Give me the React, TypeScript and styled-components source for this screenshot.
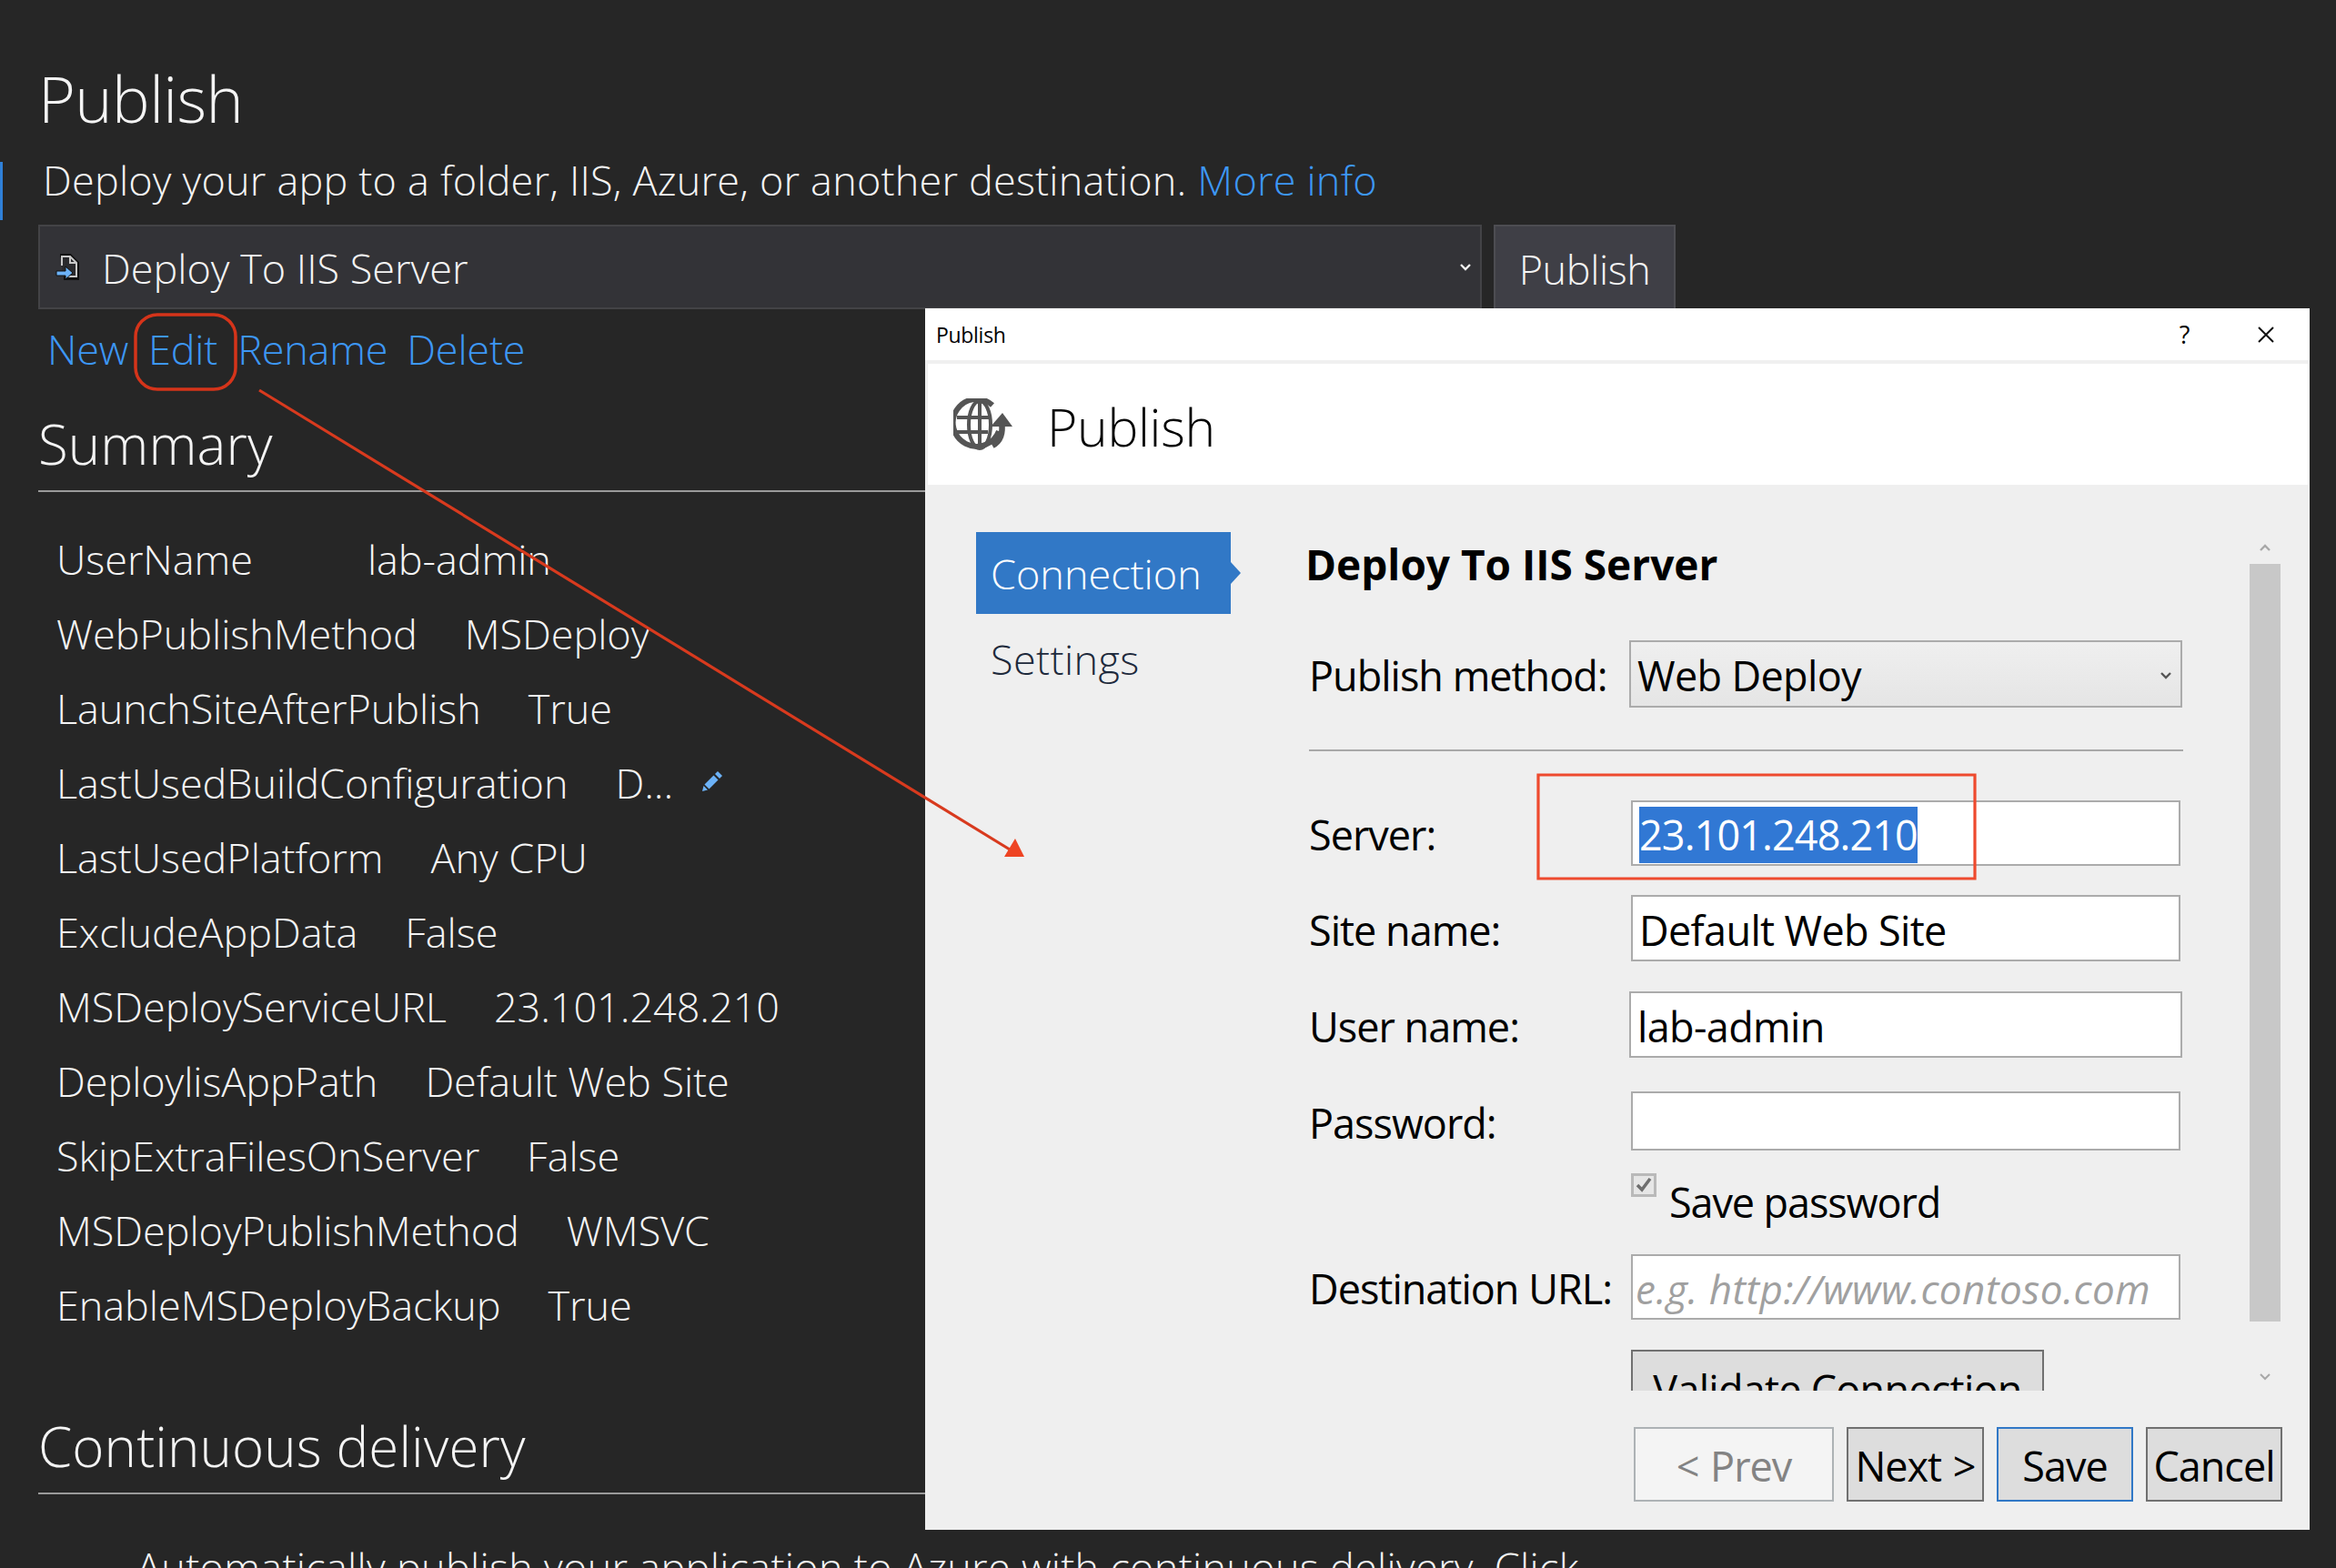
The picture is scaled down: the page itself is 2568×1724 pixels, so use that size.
import React from 'react';
import styled, { createGlobalStyle } from 'styled-components';

const FONT = `"Open Sans", "Noto Sans", sans-serif`;

const GlobalStyle = createGlobalStyle`
  html, body {
    margin: 0;
    padding: 0;
    width: 2568px;
    height: 1724px;
    overflow: hidden;
    background: #262626;
  }
`;

const Page = styled.div`
  position: relative;
  width: 2568px;
  height: 1724px;
  overflow: hidden;
  background: #262626;
  color: #f4f4f4;
  font-family: ${FONT};
`;

const LeftPanel = styled.div`
  width: 1000px;
  padding: 65px 0 0 42px;
`;

const PageTitle = styled.h1`
  margin: 0;
  font-size: 70px;
  line-height: 86px;
  font-weight: 300;
  letter-spacing: -0.6px;
`;

const IntroRow = styled.div`
  position: relative;
  margin-top: 16px;
  padding-left: 5px;
  height: 70px;
  font-size: 45px;
  line-height: 62px;
  font-weight: 350;
  letter-spacing: 0.2px;
  white-space: nowrap;
  width: 1700px;
`;

const FocusMark = styled.span`
  position: absolute;
  left: -42px;
  top: 11px;
  width: 3px;
  height: 64px;
  background: #2f80d8;
`;

const Link = styled.a`
  color: #3d97f5;
`;

const ProfileRow = styled.div`
  display: flex;
  gap: 13px;
  margin-top: 10px;
  width: 1800px;
`;

const ProfileSelect = styled.div`
  box-sizing: border-box;
  width: 1588px;
  height: 93px;
  display: flex;
  align-items: center;
  padding: 0 9px 0 17px;
  background: #333337;
  border: 2px solid #434346;
  font-size: 45px;
  font-weight: 350;
  letter-spacing: 0;
`;

const ProfileName = styled.span`
  margin-left: 21px;
  padding-top: 2px;
  flex: 1;
`;

const DarkButton = styled.div`
  box-sizing: border-box;
  width: 200px;
  height: 93px;
  display: flex;
  align-items: center;
  justify-content: center;
  padding-top: 1px;
  background: #3f3f46;
  border: 2px solid #4d4d52;
  border-bottom: none;
  font-size: 45px;
  font-weight: 350;
  letter-spacing: -0.4px;
`;

const LinkRow = styled.div`
  display: flex;
  margin: 16px 0 0 10px;
  height: 56px;
  font-size: 45px;
  line-height: 56px;
  font-weight: 350;
  letter-spacing: -0.2px;
`;

const ActionLink = styled(Link)<{ $gap: number }>`
  margin-right: ${({ $gap }) => $gap}px;
`;

const SectionTitle = styled.h2<{ $top: number }>`
  margin: ${({ $top }) => $top}px 0 0;
  height: 89px;
  font-size: 60px;
  line-height: 76px;
  font-weight: 300;
  letter-spacing: 0.1px;
  border-bottom: 2px solid #9a9a9a;
  width: 1000px;
  box-sizing: content-box;
  white-space: nowrap;
`;

const SummaryList = styled.div`
  margin: 32px 0 0 20px;
`;

const SummaryRow = styled.div<{ $gap: number }>`
  display: flex;
  align-items: center;
  height: 82px;
  gap: ${({ $gap }) => $gap}px;
  font-size: 45px;
  font-weight: 350;
  letter-spacing: -0.05px;
  white-space: nowrap;
`;

const PencilIcon = styled.svg`
  margin-left: -22px;
  margin-top: -4px;
`;

const DeliveryText = styled.div`
  margin: 50px 0 0 108px;
  width: 1800px;
  font-size: 45px;
  line-height: 60px;
  font-weight: 350;
  letter-spacing: 0.3px;
  white-space: nowrap;
`;

const Dialog = styled.div`
  position: absolute;
  left: 1017px;
  top: 339px;
  width: 1522px;
  height: 1343px;
  background: #efefef;
  color: #000;
  font-family: ${FONT};
  display: flex;
  flex-direction: column;
`;

const TitleBar = styled.div`
  height: 57px;
  flex: none;
  display: flex;
  align-items: center;
  padding: 0 38px 0 12px;
  background: #fff;
  font-size: 23px;
  letter-spacing: -0.3px;
  border-bottom: 4px solid #f0f0f0;
`;

const TitleText = styled.span`
  flex: 1;
`;

const HelpMark = styled.span`
  font-size: 27px;
  margin-right: 74px;
`;

const DialogHeader = styled.div`
  flex: none;
  height: 133px;
  margin: 0 2px 0 3px;
  display: flex;
  align-items: center;
  background: #fff;
  padding-left: 28px;
  box-sizing: border-box;
`;

const HeaderTitle = styled.span`
  margin-left: 37px;
  font-size: 57px;
  font-weight: 350;
  letter-spacing: -0.3px;
  padding-top: 4px;
`;

const DialogBody = styled.div`
  flex: none;
  height: 996px;
  display: flex;
  overflow: hidden;
`;

const Nav = styled.div`
  flex: none;
  width: 422px;
  padding: 52px 0 0 56px;
  box-sizing: border-box;
`;

const NavItem = styled.div<{ $active?: boolean }>`
  position: relative;
  box-sizing: border-box;
  width: 280px;
  height: ${({ $active }) => ($active ? 90 : 98)}px;
  padding-left: 16px;
  display: flex;
  align-items: center;
  font-size: 45px;
  font-weight: 350;
  letter-spacing: ${({ $active }) => ($active ? 0 : 0.4)}px;
  background: ${({ $active }) => ($active ? '#3178c6' : 'transparent')};
  color: ${({ $active }) => ($active ? '#fff' : '#1e2a3c')};

  &::after {
    content: '';
    display: ${({ $active }) => ($active ? 'block' : 'none')};
    position: absolute;
    left: 100%;
    top: 33px;
    border-left: 11px solid #3178c6;
    border-top: 12px solid transparent;
    border-bottom: 12px solid transparent;
  }
`;

const Form = styled.div`
  flex: none;
  width: 962px;
  padding-top: 58px;
  box-sizing: border-box;
`;

const FormTitle = styled.div`
  font-size: 46px;
  line-height: 58px;
  font-weight: 700;
  letter-spacing: 0;
  margin-left: -4px;
  white-space: nowrap;
`;

const Row = styled.div<{ $top: number }>`
  display: flex;
  align-items: center;
  margin-top: ${({ $top }) => $top}px;
`;

const Label = styled.div<{ $width?: number }>`
  flex: none;
  width: ${({ $width }) => $width ?? 354}px;
  padding-top: 3px;
  font-size: 45px;
  font-weight: 400;
  letter-spacing: -1px;
  white-space: nowrap;
`;

const Input = styled.div<{ $height: number; $width?: number }>`
  box-sizing: border-box;
  width: ${({ $width }) => $width ?? 604}px;
  height: ${({ $height }) => $height}px;
  display: flex;
  align-items: center;
  padding: 3px 0 0 7px;
  background: #fff;
  border: 2px solid #ababab;
  font-size: 45px;
  letter-spacing: -0.65px;
  white-space: nowrap;
`;

const SelectBox = styled(Input)`
  background: linear-gradient(#efefef, #e5e5e5);
  justify-content: space-between;
  padding-right: 9px;
`;

const Placeholder = styled.span`
  color: #a0a0a0;
  font-style: italic;
  font-size: 44px;
  margin-left: -4px;
  letter-spacing: 0.5px;
`;

const Selected = styled.span`
  background: #3178d4;
  color: #fff;
  padding: 4px 0;
  line-height: 54px;
  letter-spacing: -0.9px;
`;

const Separator = styled.div`
  margin-top: 46px;
  height: 2px;
  width: 961px;
  background: #a8a8a8;
`;

const CheckRow = styled.div`
  display: flex;
  margin: 25px 0 0 354px;
  height: 64px;
`;

const CheckBox = styled.div`
  box-sizing: border-box;
  flex: none;
  width: 28px;
  height: 26px;
  display: flex;
  align-items: center;
  justify-content: center;
  background: #e6e6e6;
  border: 3px solid #b9b9b9;
`;

const CheckLabel = styled.div`
  margin: 4px 0 0 14px;
  font-size: 45px;
  letter-spacing: -1.1px;
  line-height: 56px;
`;

const ValidateButton = styled.div`
  box-sizing: border-box;
  margin: 33px 0 0 354px;
  width: 454px;
  height: 120px;
  border: 2px solid #707070;
  background: #dddddd;
  text-align: center;
  font-size: 45px;
  line-height: 84px;
  letter-spacing: -0.75px;
`;

const ScrollColumn = styled.div`
  flex: none;
  width: 34px;
  margin-left: 72px;
  padding-top: 63px;
  display: flex;
  flex-direction: column;
  align-items: center;
`;

const ScrollThumb = styled.div`
  width: 34px;
  height: 833px;
  margin-top: 12px;
  background: #c8c8c8;
`;

const ScrollDown = styled.svg`
  margin-top: 55px;
`;

const Footer = styled.div`
  flex: 1;
  display: flex;
  justify-content: flex-end;
  gap: 14px;
  padding: 40px 30px 0 0;
`;

const FooterButton = styled.div<{ $width: number; $variant?: 'disabled' | 'focus' }>`
  box-sizing: border-box;
  width: ${({ $width }) => $width}px;
  height: 82px;
  display: flex;
  align-items: center;
  justify-content: center;
  padding-top: 3px;
  font-size: 45px;
  letter-spacing: -1px;
  word-spacing: 2px;
  white-space: nowrap;
  background: ${({ $variant }) => ($variant === 'disabled' ? '#f4f4f4' : '#dddddd')};
  color: ${({ $variant }) => ($variant === 'disabled' ? '#838383' : '#000')};
  border: 2px solid
    ${({ $variant }) =>
      $variant === 'disabled' ? '#adb2b5' : $variant === 'focus' ? '#3178c6' : '#707070'};
`;

const Annotations = styled.svg`
  position: absolute;
  left: 0;
  top: 0;
  pointer-events: none;
`;

const DeployFileIcon = () => (
  <svg width="30" height="30" viewBox="0 0 30 30">
    <path d="M5 2h11l8 8v17H9" fill="#2a2a2d" stroke="#111" strokeWidth="4" />
    <path d="M7 13V3h9l7 7v15H11" fill="none" stroke="#c8c8c8" strokeWidth="2" />
    <path d="M16 3v7h7" fill="none" stroke="#c8c8c8" strokeWidth="2" />
    <path d="M1 19h10v-5l8 7-8 7v-4H1z" fill="#6cb2f7" stroke="#111" strokeWidth="1" />
  </svg>
);

const Chevron = ({ color, up }: { color: string; up?: boolean }) => (
  <svg width="14" height="12" viewBox="0 0 14 12">
    <path
      d={up ? 'M2 9l5-5 5 5' : 'M2 3l5 5 5-5'}
      fill="none"
      stroke={color}
      strokeWidth="2.4"
    />
  </svg>
);

const GlobeUploadIcon = () => (
  <svg width="66" height="58" viewBox="0 0 66 58">
    <g fill="none" stroke="#555" strokeLinecap="butt">
      <path d="M43 7.500A26 26 0 1 0 50 36" strokeWidth="6" />
      <ellipse cx="29" cy="29" rx="12" ry="26" strokeWidth="4" />
      <path d="M29 3v52M4 21h38M4 37h34" strokeWidth="4" />
      <path d="M43 52c9-5 12-14 10-26" strokeWidth="6.500" />
    </g>
    <path d="M41 31L54 16l11 15z" fill="#555" />
  </svg>
);

const summary: { name: string; value: string; gap?: number }[] = [
  { name: 'UserName', value: 'lab-admin', gap: 126 },
  { name: 'WebPublishMethod', value: 'MSDeploy' },
  { name: 'LaunchSiteAfterPublish', value: 'True' },
  { name: 'LastUsedBuildConfiguration', value: 'D...' },
  { name: 'LastUsedPlatform', value: 'Any CPU' },
  { name: 'ExcludeAppData', value: 'False' },
  { name: 'MSDeployServiceURL', value: '23.101.248.210' },
  { name: 'DeploylisAppPath', value: 'Default Web Site' },
  { name: 'SkipExtraFilesOnServer', value: 'False' },
  { name: 'MSDeployPublishMethod', value: 'WMSVC' },
  { name: 'EnableMSDeployBackup', value: 'True' },
];

export default function App() {
  return (
    <Page>
      <GlobalStyle />
      <LeftPanel>
        <PageTitle>Publish</PageTitle>
        <IntroRow>
          <FocusMark />
          Deploy your app to a folder, IIS, Azure, or another destination. <Link>More info</Link>
        </IntroRow>
        <ProfileRow>
          <ProfileSelect>
            <DeployFileIcon />
            <ProfileName>Deploy To IIS Server</ProfileName>
            <Chevron color="#f1f1f1" />
          </ProfileSelect>
          <DarkButton>Publish</DarkButton>
        </ProfileRow>
        <LinkRow>
          <ActionLink $gap={22}>New</ActionLink>
          <ActionLink $gap={22}>Edit</ActionLink>
          <ActionLink $gap={21}>Rename</ActionLink>
          <ActionLink $gap={0}>Delete</ActionLink>
        </LinkRow>
        <SectionTitle $top={38}>Summary</SectionTitle>
        <SummaryList>
          {summary.map((row) => (
            <SummaryRow key={row.name} $gap={row.gap ?? 52}>
              <span>{row.name}</span>
              <span>{row.value}</span>
              {row.value === 'D...' && (
                <PencilIcon width="28" height="28" viewBox="0 0 28 28">
                  <path d="M19 4l5 5-3 3-5-5z" fill="#6cb2f7" />
                  <path d="M14.500 8.500l5 5-10 10-5-5z" fill="#6cb2f7" />
                  <path d="M3.500 20l4.500 4.500-6 1.500z" fill="#6cb2f7" />
                </PencilIcon>
              )}
            </SummaryRow>
          ))}
        </SummaryList>
        <SectionTitle $top={77}>Continuous delivery</SectionTitle>
        <DeliveryText>
          Automatically publish your application to Azure with continuous delivery. Click
        </DeliveryText>
      </LeftPanel>

      <Dialog>
        <TitleBar>
          <TitleText>Publish</TitleText>
          <HelpMark>?</HelpMark>
          <svg width="20" height="20" viewBox="0 0 20 20">
            <path d="M2 2l16 16M18 2L2 18" stroke="#111" strokeWidth="2" />
          </svg>
        </TitleBar>
        <DialogHeader>
          <GlobeUploadIcon />
          <HeaderTitle>Publish</HeaderTitle>
        </DialogHeader>
        <DialogBody>
          <Nav>
            <NavItem $active>Connection</NavItem>
            <NavItem>Settings</NavItem>
          </Nav>
          <Form>
            <FormTitle>Deploy To IIS Server</FormTitle>
            <Row $top={55}>
              <Label $width={352}>Publish method:</Label>
              <SelectBox $height={74} $width={608}>
                Web Deploy
                <Chevron color="#555" />
              </SelectBox>
            </Row>
            <Separator />
            <Row $top={54}>
              <Label>Server:</Label>
              <Input $height={72}>
                <Selected>23.101.248.210</Selected>
              </Input>
            </Row>
            <Row $top={32}>
              <Label>Site name:</Label>
              <Input $height={73}>Default Web Site</Input>
            </Row>
            <Row $top={33}>
              <Label $width={352}>User name:</Label>
              <Input $height={73} $width={608}>
                lab-admin
              </Input>
            </Row>
            <Row $top={37}>
              <Label>Password:</Label>
              <Input $height={65} />
            </Row>
            <CheckRow>
              <CheckBox>
                <svg width="18" height="16" viewBox="0 0 18 16">
                  <path d="M2 8l5 5 9-12" fill="none" stroke="#6e6e6e" strokeWidth="3.500" />
                </svg>
              </CheckBox>
              <CheckLabel>Save password</CheckLabel>
            </CheckRow>
            <Row $top={25}>
              <Label>Destination URL:</Label>
              <Input $height={72}>
                <Placeholder>e.g. http://www.contoso.com</Placeholder>
              </Input>
            </Row>
            <ValidateButton>Validate Connection</ValidateButton>
          </Form>
          <ScrollColumn>
            <Chevron color="#a8a8a8" up />
            <ScrollThumb />
            <ScrollDown width="14" height="12" viewBox="0 0 14 12">
              <path d="M2 3l5 5 5-5" fill="none" stroke="#a8a8a8" strokeWidth="2" />
            </ScrollDown>
          </ScrollColumn>
        </DialogBody>
        <Footer>
          <FooterButton $width={220} $variant="disabled">
            &lt; Prev
          </FooterButton>
          <FooterButton $width={151}>Next &gt;</FooterButton>
          <FooterButton $width={150} $variant="focus">
            Save
          </FooterButton>
          <FooterButton $width={150}>Cancel</FooterButton>
        </Footer>
      </Dialog>

      <Annotations width="2568" height="1724" viewBox="0 0 2568 1724">
        <rect x="149" y="346" width="110" height="82" rx="24" fill="none" stroke="#d5341a" strokeWidth="3.500" />
        <path d="M285 429L1110 934" stroke="#d83a1e" strokeWidth="3.200" />
        <path d="M1116 922L1126 942H1104z" fill="#ee4423" />
        <path d="M1691 852H2171V966H1691z" fill="none" stroke="#ee4a2e" strokeWidth="3.200" />
      </Annotations>
    </Page>
  );
}
